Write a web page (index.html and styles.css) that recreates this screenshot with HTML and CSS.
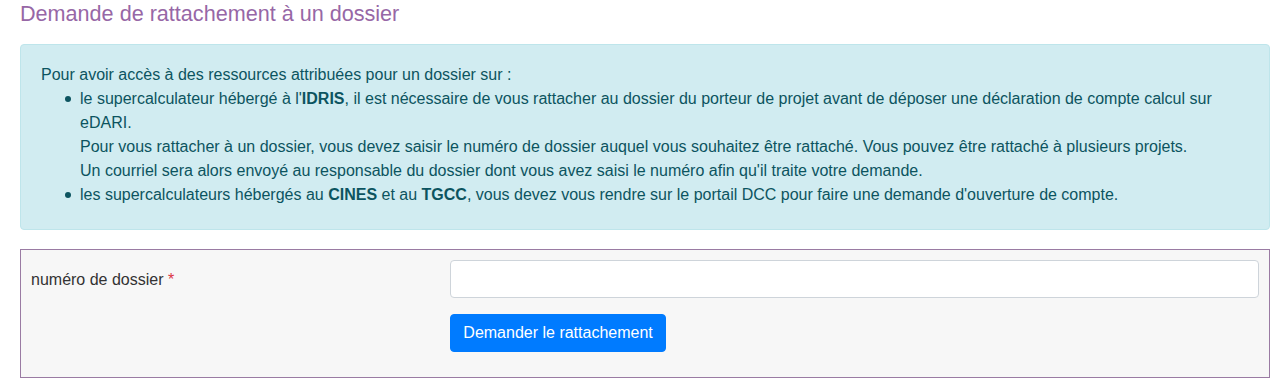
FILE: index.html
```html
<!DOCTYPE html>
<html lang="fr">
<head>
  <meta charset="UTF-8" />
  <title>Demande de rattachement à un dossier</title>
  <meta name="viewport" content="width=device-width, initial-scale=1.0" />
  <link rel="stylesheet" href="styles.css">
</head>
<body>

<div class="page">
  <h1 class="page-title">Demande de rattachement à un dossier</h1>

  <!-- Bloc d'information -->
  <div class="alert-info">
    Pour avoir accès à des ressources attribuées pour un dossier sur :
    <ul>
      <li>
        le supercalculateur hébergé à l'<b>IDRIS</b>, il est nécessaire de vous rattacher au dossier du porteur de projet avant de déposer une déclaration de compte calcul sur eDARI.<br>
        Pour vous rattacher à un dossier, vous devez saisir le numéro de dossier auquel vous souhaitez être rattaché. Vous pouvez être rattaché à plusieurs projets.<br>
        Un courriel sera alors envoyé au responsable du dossier dont vous avez saisi le numéro afin qu'il traite votre demande.
      </li>
      <li>
        les supercalculateurs hébergés au <b>CINES</b> et au <b>TGCC</b>, vous devez vous rendre sur le portail DCC pour faire une demande d'ouverture de compte.
      </li>
    </ul>
  </div>

  <!-- Formulaire -->
  <form class="form-box" onsubmit="return false;">
    <div class="form-row">
      <label class="col-label" for="dossier-input">numéro de dossier <span class="required">*</span></label>
      <div class="col-field">
        <input type="text" id="dossier-input" class="form-input" />
      </div>
    </div>
    <div class="form-row">
      <div class="col-label"></div>
      <div class="col-field">
        <button type="submit" class="btn-primary">Demander le rattachement</button>
      </div>
    </div>
  </form>
</div>

</body>
</html>
```

FILE: styles.css
```css
body {
  font-family: "Liberation Sans", Arial, sans-serif;
  font-size: 16px;
  line-height: 1.5;
  color: #212529;
  background: #fff;
  margin: 0;
}

.page {
  padding: 0 10px 0 20px;
}

/* Titre */
.page-title {
  font-size: 21.6px;
  font-weight: normal;
  line-height: 24px;
  color: #9767a6;
  margin: 2px 0 18px 0;
}

/* Bloc d'information */
.alert-info {
  background: #d1ecf1;
  border: 1px solid #bee5eb;
  border-radius: 4px;
  color: #0c5460;
  padding: 18px 20px 22px 20px;
}

.alert-info ul {
  margin: 0;
  padding-left: 39px;
  list-style: none;
}

.alert-info li {
  position: relative;
}

/* puce ronde un peu plus grosse que celle du navigateur */
.alert-info li::before {
  content: "";
  position: absolute;
  left: -15px;
  top: 9px;
  width: 6px;
  height: 6px;
  border-radius: 50%;
  background: #0c5460;
}

.alert-info b {
  font-weight: bold;
}

/* Formulaire */
.form-box {
  margin-top: 19px;
  background: #f7f7f7;
  border: 1px solid #9a7ba3;
  padding: 10px 10px 9px 10px;
}

.form-row {
  display: flex;
  margin: 0 -15px 16px -15px;
}

.col-label {
  flex: 0 0 33.333%;
  box-sizing: border-box;
  padding: 8px 15px 0 15px;
  color: #333;
}

.col-field {
  flex: 0 0 66.667%;
  box-sizing: border-box;
  padding: 0 15px;
}

.required {
  color: #dc3545;
}

.form-input {
  display: block;
  width: 100%;
  box-sizing: border-box;
  height: 38px;
  padding: 6px 12px;
  font-family: inherit;
  font-size: 16px;
  color: #495057;
  background: #fff;
  border: 1px solid #ced4da;
  border-radius: 4px;
}

.btn-primary {
  display: inline-block;
  height: 38px;
  padding: 6px 12px;
  font-family: inherit;
  font-size: 16px;
  line-height: 24px;
  color: #fff;
  background: #007bff;
  border: 1px solid #007bff;
  border-radius: 4px;
  cursor: pointer;
}

.btn-primary:hover {
  background: #0069d9;
}
```
